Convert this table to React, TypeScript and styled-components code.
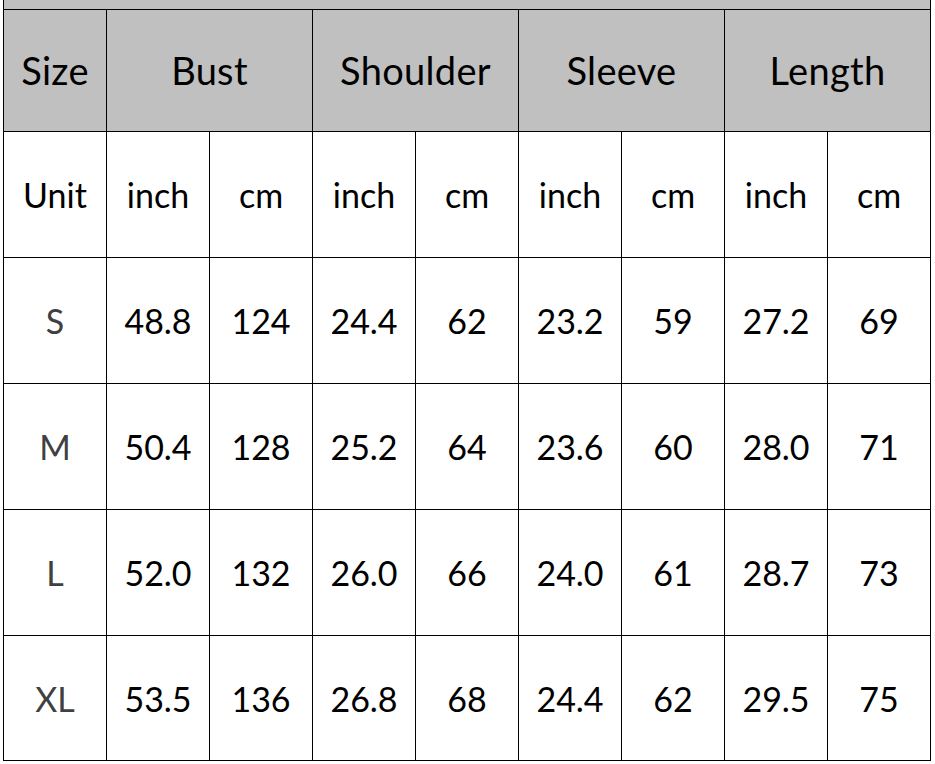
import React from "react";
import styled, { createGlobalStyle } from "styled-components";

const Global = createGlobalStyle`
  html, body { margin: 0; padding: 0; background: #ffffff; }
  body { font-family: Lato, "Open Sans", sans-serif; }
`;

const Grid = styled.div`
  margin-left: 3px;
  width: 928px;
  display: grid;
  grid-template-columns: repeat(9, 102px);
  grid-template-rows: 9px 121px 125px 125px 125px 125px 124px;
  gap: 1px;
  padding: 0 1px 1px 1px;
  box-sizing: border-box;
  background: #000000;
`;

const Band = styled.div`
  grid-column: 1 / -1;
  background: #c0c0c0;
`;

const HeadCell = styled.div<{ $span?: number }>`
  grid-column: span ${(p) => p.$span ?? 1};
  background: #c0c0c0;
  display: flex;
  align-items: center;
  justify-content: center;
  font-size: 38px;
  font-weight: 400;
  color: #000;
  letter-spacing: 0.3px;
  padding-bottom: 2px;
`;

const Cell = styled.div<{ $label?: boolean }>`
  background: #ffffff;
  display: flex;
  align-items: center;
  justify-content: center;
  font-size: 34px;
  color: ${(p) => (p.$label ? "#404040" : "#000000")};
`;

const heads: [string, number][] = [
  ["Size", 1],
  ["Bust", 2],
  ["Shoulder", 2],
  ["Sleeve", 2],
  ["Length", 2],
];

const units = ["inch", "cm", "inch", "cm", "inch", "cm", "inch", "cm"];

const rows: [string, string[]][] = [
  ["S", ["48.8", "124", "24.4", "62", "23.2", "59", "27.2", "69"]],
  ["M", ["50.4", "128", "25.2", "64", "23.6", "60", "28.0", "71"]],
  ["L", ["52.0", "132", "26.0", "66", "24.0", "61", "28.7", "73"]],
  ["XL", ["53.5", "136", "26.8", "68", "24.4", "62", "29.5", "75"]],
];

export default function App() {
  return (
    <>
      <Global />
      <Grid>
        <Band />
        {heads.map(([h, s]) => (
          <HeadCell key={h} $span={s}>
            {h}
          </HeadCell>
        ))}
        <Cell>Unit</Cell>
        {units.map((u, i) => (
          <Cell key={"u" + i}>{u}</Cell>
        ))}
        {rows.map(([size, vals]) => (
          <React.Fragment key={size}>
            <Cell $label>{size}</Cell>
            {vals.map((v, i) => (
              <Cell key={size + i}>{v}</Cell>
            ))}
          </React.Fragment>
        ))}
      </Grid>
    </>
  );
}
